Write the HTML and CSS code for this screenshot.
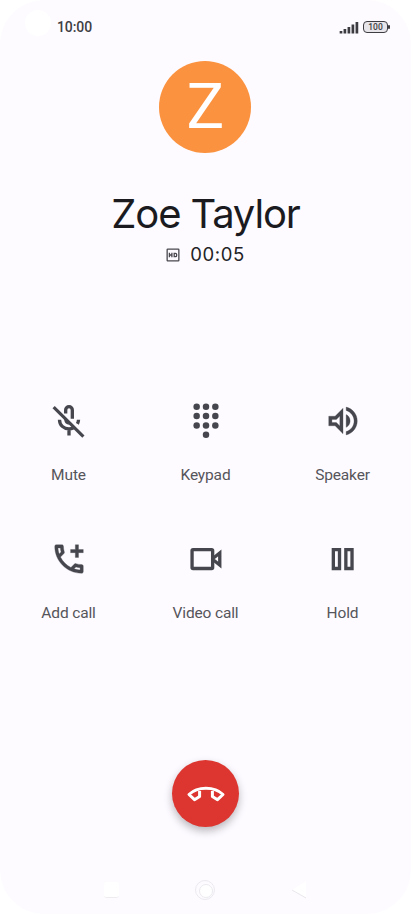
FILE: index.html
```
<!DOCTYPE html>
<html lang="en">
<head>
<meta charset="utf-8">
<title>Call</title>
<link rel="stylesheet" href="styles.css">
</head>
<body>
<main class="phone">
  <header class="status">
    <i class="camera"></i>
    <span class="clock">10:00</span>
    <svg class="signal" width="20" height="13" viewBox="0 0 20 13"><path d="M2 12.500v-2.500M5.900 12.500V8M9.900 12.500V6M13.900 12.500V3.500M17.900 12.500V1" stroke="#3c3c40" stroke-width="2.700"/></svg>
    <span class="battery">100</span>
  </header>
  <section class="caller">
    <div class="avatar">Z</div>
    <h1 class="name">Zoe Taylor</h1>
    <div class="duration">
      <svg width="14" height="14" viewBox="0 0 14 14" fill="none" stroke="#49484f" stroke-width="1.300"><rect x="1.150" y="1.150" width="11.700" height="11.700" rx=".6"/><path d="M3.400 4.800v4.400M3.400 7h2.400M5.900 4.800v4.400M8.200 5.300h1.300q1.100 0 1.100 1v1.400q0 1-1.100 1H8.200z"/></svg>
      <span class="timer">00:05</span>
    </div>
  </section>
  <section class="controls">
    <button class="control">
      <svg class="icon outline" viewBox="0 0 24 24"><path d="M9.900 7.200V5a2.100 2.100 0 0 1 4.200 0v5.600M18 11.200q0 1.300-.7 2.600M6 11.200C6 14.700 8.700 17 12 17q1.600 0 2.900-.7M12 17v4.200"/><path d="M9 9.800v1.300c0 1.900 1.300 3.300 3.200 3.300z" class="solid"/><path d="m2.300 3.200 18.800 18.600" class="slash"/></svg>
      <span class="label">Mute</span>
    </button>
    <button class="control">
      <svg class="icon" viewBox="0 0 24 24"><circle cx="6.100" cy="3" r="2.050"/><circle cx="12" cy="3" r="2.050"/><circle cx="17.900" cy="3" r="2.050"/><circle cx="6.100" cy="8.900" r="2.050"/><circle cx="12" cy="8.900" r="2.050"/><circle cx="17.900" cy="8.900" r="2.050"/><circle cx="6.100" cy="14.800" r="2.050"/><circle cx="12" cy="14.800" r="2.050"/><circle cx="17.900" cy="14.800" r="2.050"/><circle cx="12" cy="20.700" r="2.050"/></svg>
      <span class="label">Keypad</span>
    </button>
    <button class="control">
      <svg class="icon" viewBox="0 0 24 24"><path d="M3 9v6h4l5 5V4L7 9H3zm7-.17v6.340L7.830 13H5v-2h2.830L10 8.830zM16.500 12c0-1.770-1.020-3.290-2.500-4.030v8.050c1.480-.73 2.500-2.250 2.500-4.020zM14 3.230v2.060c2.890.86 5 3.540 5 6.710s-2.110 5.850-5 6.710v2.060c4.010-.91 7-4.490 7-8.770s-2.990-7.860-7-8.770z" class="heavy"/></svg>
      <span class="label">Speaker</span>
    </button>
    <button class="control">
      <svg class="icon" viewBox="0 0 24 24"><path d="M20 15.500c-1.250 0-2.450-.2-3.570-.57-.1-.03-.21-.05-.31-.05-.26 0-.51.100-.71.290l-2.200 2.200c-2.830-1.440-5.150-3.750-6.590-6.590l2.200-2.210c.28-.26.360-.65.250-1C8.700 6.450 8.500 5.250 8.500 4c0-.55-.45-1-1-1H4c-.55 0-1 .45-1 1 0 9.390 7.610 17 17 17 .55 0 1-.45 1-1v-3.500c0-.55-.45-1-1-1zM5.030 5h1.500c.07.880.220 1.750.460 2.590L5.790 8.800c-.41-1.210-.67-2.480-.76-3.800zM19 18.970c-1.320-.09-2.600-.35-3.800-.76l1.200-1.200c.85.240 1.720.390 2.600.450v1.510zM18 3h-2v3h-3v2h3v3h2V8h3V6h-3z" class="heavy"/></svg>
      <span class="label">Add call</span>
    </button>
    <button class="control">
      <svg class="icon outline" viewBox="0 0 24 24"><rect x="3.200" y="6.100" width="13" height="11.900" rx=".6"/><path d="M16.700 11.400 20.700 8.200v7.600l-4-3.200"/></svg>
      <span class="label">Video call</span>
    </button>
    <button class="control">
      <svg class="icon outline" viewBox="0 0 24 24"><path d="M5.900 6.100h3.900v11.900H5.900zM13.800 6.100h3.900v11.900h-3.900z"/></svg>
      <span class="label">Hold</span>
    </button>
  </section>
  <button class="hangup" aria-label="End call">
    <svg width="40" height="24" viewBox="0 0 40 24" fill="none" stroke="#fff" stroke-width="3" stroke-linejoin="round"><path d="M13.600 7.400v7L8.500 17.700 3 12.500C11.500 4.200 28.500 4.200 37 12.500l-5.500 5.200-5.100-3.300v-7"/></svg>
  </button>
  <nav class="nav">
    <i class="recent"></i>
    <i class="home"></i>
    <svg class="back" width="16" height="20" viewBox="0 0 16 20"><path d="M15 1 1 10l14 8z" fill="#fff"/><path d="m1 10 14 8" stroke="#e9e7ec"/></svg>
  </nav>
</main>
</body>
</html>
```
FILE: styles.css
```
* { box-sizing: border-box; }
body { margin: 0; background: #fff; font-family: Roboto, sans-serif; }
.phone {
  width: 411px; height: 914px;
  display: flex; flex-direction: column; align-items: center;
  background: #fdfbff; border-radius: 44px; overflow: hidden;
}
.status {
  width: 100%; height: 60px; padding: 0 21px 6px 25px;
  display: flex; align-items: center;
}
.camera { width: 26px; height: 26px; border-radius: 50%; background: #fff; margin-top: -8px; }
.clock { margin-left: 6px; font-size: 14px; font-weight: 500; line-height: 20px; color: #3f3e43; letter-spacing: -.1px; }
.signal { margin-left: auto; margin-right: 4px; }
.battery {
  position: relative; width: 25px; height: 12px; margin-right: 2px;
  border: 1.500px solid #3e3d42; border-radius: 4px; background: #e7e5e9;
  font-size: 8.500px; font-weight: 500; line-height: 10px; text-align: center; color: #3e3d42;
}
.battery::after { content: ""; position: absolute; right: -3px; top: 3px; width: 2px; height: 4px; background: #3e3d42; border-radius: 1px; }
.caller { display: flex; flex-direction: column; align-items: center; }
.avatar {
  width: 92px; height: 92px; margin-top: .5px; border-radius: 50%; background: #fb923f; color: #fff;
  font-size: 63px; line-height: 92px; text-align: center;
}
.name {
  margin: 33.500px 0 0; height: 56px; line-height: 56px; white-space: nowrap;
  font-family: Inter, sans-serif; font-size: 40px; font-weight: 400; letter-spacing: -1.150px; color: #1b1b1f;
}
.duration { display: flex; align-items: center; gap: 10px; height: 26px; }
.timer { font-family: Inter, sans-serif; font-size: 18.500px; font-weight: 400; line-height: 24px; margin-top: -2px; letter-spacing: .6px; color: #232327; }
.controls {
  width: 100%; margin-top: 134px;
  display: grid; grid-template-columns: repeat(3, 1fr); grid-auto-rows: 138px;
}
.control {
  display: flex; flex-direction: column; align-items: center; gap: 25.500px;
  padding: 0; border: 0; background: none; font-family: inherit; color: #46464f;
}
.icon { width: 38px; height: 38px; fill: #46464e; overflow: visible; }
.icon.outline { fill: none; stroke: #46464e; stroke-width: 2.100; }
.icon .solid { fill: #46464e; stroke: none; }
.icon .slash { stroke-width: 2; }
.icon .heavy { stroke: #46464e; stroke-width: .2; }
.label { font-size: 15.500px; font-weight: 400; line-height: 18px; letter-spacing: -.15px; color: #56555b; }
.hangup {
  width: 67px; height: 67px; margin-top: 82px; padding: 0; border: 0; border-radius: 50%;
  display: flex; align-items: center; justify-content: center;
  background: #dd352f; box-shadow: 0 4px 8px rgba(0, 0, 0, .27);
}
.nav { width: 100%; margin-top: 53px; padding-left: 104px; display: flex; align-items: center; }
.recent { width: 15px; height: 16px; border-radius: 3px; background: #fff; border-bottom: 1px solid #eeecf1; }
.home { width: 20px; height: 20px; margin-left: 76px; border-radius: 50%; border: 1px solid #ebe9ee; padding: 3px; }
.home::before { content: ""; display: block; width: 12px; height: 12px; border-radius: 50%; border: 1px solid #ebe9ee; background: #fff; }
.back { margin-left: 76px; }
```
